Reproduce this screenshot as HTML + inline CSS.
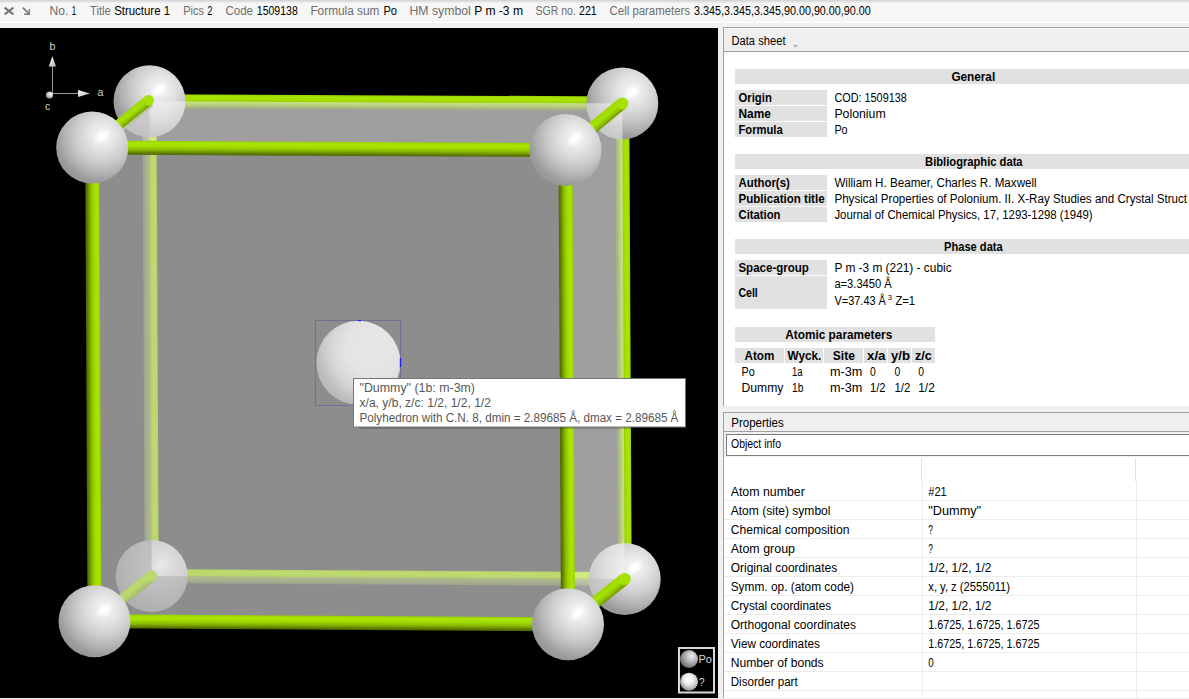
<!DOCTYPE html>
<html><head><meta charset="utf-8"><style>
html,body{margin:0;padding:0;background:#f0f0f0;overflow:hidden}
svg{display:block}
text{font-family:"Liberation Sans",sans-serif}
</style></head><body>
<svg width="1189" height="699" viewBox="0 0 1189 699">
<defs>
<radialGradient id="sph" cx="0.64" cy="0.33" r="0.8" fx="0.64" fy="0.33">
<stop offset="0" stop-color="#ffffff"/><stop offset="0.1" stop-color="#f0f0f0"/><stop offset="0.28" stop-color="#e0e0e0"/>
<stop offset="0.48" stop-color="#cbcbcb"/><stop offset="0.66" stop-color="#b2b2b2"/><stop offset="0.8" stop-color="#9c9c9c"/><stop offset="0.9" stop-color="#969696"/><stop offset="1" stop-color="#a0a0a0"/></radialGradient>
<radialGradient id="spec" cx="0.5" cy="0.5" r="0.5"><stop offset="0" stop-color="#fff" stop-opacity="1"/><stop offset="0.4" stop-color="#fff" stop-opacity="0.75"/><stop offset="1" stop-color="#fff" stop-opacity="0"/></radialGradient>
<radialGradient id="sphd" cx="0.68" cy="0.34" r="0.82" fx="0.68" fy="0.34">
<stop offset="0" stop-color="#ffffff"/><stop offset="0.4" stop-color="#f8f8f8"/><stop offset="0.62" stop-color="#dcdcdc"/><stop offset="0.8" stop-color="#acacac"/><stop offset="0.92" stop-color="#969696"/><stop offset="1" stop-color="#a4a4a4"/></radialGradient>
<radialGradient id="sphs" cx="0.6" cy="0.4" r="0.64"><stop offset="0" stop-color="#ffffff"/><stop offset="1" stop-color="#909090"/></radialGradient>
<radialGradient id="sphl1" cx="0.62" cy="0.38" r="0.66" fx="0.65" fy="0.33"><stop offset="0" stop-color="#f0f0f0"/><stop offset="0.4" stop-color="#c0c0c0"/><stop offset="1" stop-color="#6a6a6a"/></radialGradient>
<radialGradient id="sphl2" cx="0.6" cy="0.4" r="0.66" fx="0.4" fy="0.35"><stop offset="0" stop-color="#ffffff"/><stop offset="0.4" stop-color="#eeeeee"/><stop offset="1" stop-color="#8a8a8a"/></radialGradient>
<linearGradient id="arr" x1="0" y1="0" x2="1" y2="1"><stop offset="0" stop-color="#ffffff"/><stop offset="1" stop-color="#b0b0b0"/></linearGradient>
<linearGradient id="cg1" gradientUnits="userSpaceOnUse" x1="385.87" y1="109.30" x2="385.93" y2="95.30"><stop offset="0" stop-color="#4e6600"/><stop offset="0.12" stop-color="#5e7c00"/><stop offset="0.35" stop-color="#88b800"/><stop offset="0.6" stop-color="#a2dc00"/><stop offset="0.82" stop-color="#aae600"/><stop offset="1" stop-color="#98d000"/></linearGradient>
<linearGradient id="cg2" gradientUnits="userSpaceOnUse" x1="616.50" y1="341.24" x2="630.50" y2="341.16"><stop offset="0" stop-color="#4e6600"/><stop offset="0.12" stop-color="#5e7c00"/><stop offset="0.35" stop-color="#88b800"/><stop offset="0.6" stop-color="#a2dc00"/><stop offset="0.82" stop-color="#aae600"/><stop offset="1" stop-color="#98d000"/></linearGradient>
<linearGradient id="cg3" gradientUnits="userSpaceOnUse" x1="388.16" y1="584.50" x2="388.24" y2="570.50"><stop offset="0" stop-color="#4e6600"/><stop offset="0.12" stop-color="#5e7c00"/><stop offset="0.35" stop-color="#88b800"/><stop offset="0.6" stop-color="#a2dc00"/><stop offset="0.82" stop-color="#aae600"/><stop offset="1" stop-color="#98d000"/></linearGradient>
<linearGradient id="cg4" gradientUnits="userSpaceOnUse" x1="143.60" y1="338.63" x2="157.60" y2="338.57"><stop offset="0" stop-color="#4e6600"/><stop offset="0.12" stop-color="#5e7c00"/><stop offset="0.35" stop-color="#88b800"/><stop offset="0.6" stop-color="#a2dc00"/><stop offset="0.82" stop-color="#aae600"/><stop offset="1" stop-color="#98d000"/></linearGradient>
<linearGradient id="cg5" gradientUnits="userSpaceOnUse" x1="124.75" y1="129.22" x2="116.95" y2="119.58"><stop offset="0" stop-color="#6e9a00"/><stop offset="0.3" stop-color="#90c800"/><stop offset="0.6" stop-color="#a6e200"/><stop offset="1" stop-color="#9cd800"/></linearGradient>
<linearGradient id="cg6" gradientUnits="userSpaceOnUse" x1="126.51" y1="602.96" x2="119.69" y2="594.34"><stop offset="0" stop-color="#6e9a00"/><stop offset="0.3" stop-color="#90c800"/><stop offset="0.6" stop-color="#a6e200"/><stop offset="1" stop-color="#9cd800"/></linearGradient>
<linearGradient id="cg7" gradientUnits="userSpaceOnUse" x1="123.32" y1="127.44" x2="116.78" y2="119.36"><stop offset="0" stop-color="#6e9a00"/><stop offset="0.3" stop-color="#90c800"/><stop offset="0.6" stop-color="#a6e200"/><stop offset="1" stop-color="#9cd800"/></linearGradient>
<linearGradient id="cg8" gradientUnits="userSpaceOnUse" x1="597.71" y1="131.38" x2="590.09" y2="122.12"><stop offset="0" stop-color="#6e9a00"/><stop offset="0.3" stop-color="#90c800"/><stop offset="0.6" stop-color="#a6e200"/><stop offset="1" stop-color="#9cd800"/></linearGradient>
<linearGradient id="cg9" gradientUnits="userSpaceOnUse" x1="600.10" y1="606.34" x2="592.60" y2="596.96"><stop offset="0" stop-color="#6e9a00"/><stop offset="0.3" stop-color="#90c800"/><stop offset="0.6" stop-color="#a6e200"/><stop offset="1" stop-color="#9cd800"/></linearGradient>
<linearGradient id="cg10" gradientUnits="userSpaceOnUse" x1="328.81" y1="155.85" x2="328.89" y2="141.85"><stop offset="0" stop-color="#4e6600"/><stop offset="0.12" stop-color="#5e7c00"/><stop offset="0.35" stop-color="#88b800"/><stop offset="0.6" stop-color="#a2dc00"/><stop offset="0.82" stop-color="#aae600"/><stop offset="1" stop-color="#98d000"/></linearGradient>
<linearGradient id="cg11" gradientUnits="userSpaceOnUse" x1="559.75" y1="387.24" x2="573.75" y2="387.16"><stop offset="0" stop-color="#4e6600"/><stop offset="0.12" stop-color="#5e7c00"/><stop offset="0.35" stop-color="#88b800"/><stop offset="0.6" stop-color="#a2dc00"/><stop offset="0.82" stop-color="#aae600"/><stop offset="1" stop-color="#98d000"/></linearGradient>
<linearGradient id="cg12" gradientUnits="userSpaceOnUse" x1="331.21" y1="629.80" x2="331.29" y2="615.80"><stop offset="0" stop-color="#4e6600"/><stop offset="0.12" stop-color="#5e7c00"/><stop offset="0.35" stop-color="#88b800"/><stop offset="0.6" stop-color="#a2dc00"/><stop offset="0.82" stop-color="#aae600"/><stop offset="1" stop-color="#98d000"/></linearGradient>
<linearGradient id="cg13" gradientUnits="userSpaceOnUse" x1="86.35" y1="384.48" x2="100.35" y2="384.42"><stop offset="0" stop-color="#4e6600"/><stop offset="0.12" stop-color="#5e7c00"/><stop offset="0.35" stop-color="#88b800"/><stop offset="0.6" stop-color="#a2dc00"/><stop offset="0.82" stop-color="#aae600"/><stop offset="1" stop-color="#98d000"/></linearGradient></defs>
<rect x="0" y="0" width="1189" height="28" fill="#f6f6f6"/>
<rect x="0" y="0" width="1189" height="1" fill="#d6d6d6"/>
<rect x="0" y="1" width="1189" height="1" fill="#e2e2e2"/>
<rect x="0" y="2" width="1189" height="1" fill="#ececec"/>
<rect x="0" y="22" width="1189" height="1" fill="#ffffff"/>
<rect x="0" y="23" width="1189" height="5" fill="#f0f0f0"/>
<path d="M4.6,7.6 L13.4,14.4 M13.4,7.6 L4.6,14.4" stroke="#777" stroke-width="2.1"/>
<path d="M22.8,7.6 L28.6,13.4" stroke="#7a7a7a" stroke-width="1.8" fill="none"/><path d="M28.6,9 L30,9 L30,15 L24,15 L24,13.6 L28.6,13.6 Z" fill="#7a7a7a"/>
<text x="49.5" y="15.2" font-size="12.5" font-weight="normal" fill="#6d6d6d" text-anchor="start" textLength="18.8" lengthAdjust="spacingAndGlyphs">No.</text>
<text x="71.7" y="15.2" font-size="12.5" font-weight="normal" fill="#000" text-anchor="start" textLength="4.4" lengthAdjust="spacingAndGlyphs">1</text>
<text x="90.0" y="15.2" font-size="12.5" font-weight="normal" fill="#6d6d6d" text-anchor="start" textLength="20.8" lengthAdjust="spacingAndGlyphs">Title</text>
<text x="114.2" y="15.2" font-size="12.5" font-weight="normal" fill="#000" text-anchor="start" textLength="55.8" lengthAdjust="spacingAndGlyphs">Structure 1</text>
<text x="183.3" y="15.2" font-size="12.5" font-weight="normal" fill="#6d6d6d" text-anchor="start" textLength="20.6" lengthAdjust="spacingAndGlyphs">Pics</text>
<text x="207.3" y="15.2" font-size="12.5" font-weight="normal" fill="#000" text-anchor="start" textLength="5.2" lengthAdjust="spacingAndGlyphs">2</text>
<text x="225.6" y="15.2" font-size="12.5" font-weight="normal" fill="#6d6d6d" text-anchor="start" textLength="27.4" lengthAdjust="spacingAndGlyphs">Code</text>
<text x="256.8" y="15.2" font-size="12.5" font-weight="normal" fill="#000" text-anchor="start" textLength="41.0" lengthAdjust="spacingAndGlyphs">1509138</text>
<text x="310.4" y="15.2" font-size="12.5" font-weight="normal" fill="#6d6d6d" text-anchor="start" textLength="69.1" lengthAdjust="spacingAndGlyphs">Formula sum</text>
<text x="383.4" y="15.2" font-size="12.5" font-weight="normal" fill="#000" text-anchor="start" textLength="13.6" lengthAdjust="spacingAndGlyphs">Po</text>
<text x="409.5" y="15.2" font-size="12.5" font-weight="normal" fill="#6d6d6d" text-anchor="start" textLength="61.3" lengthAdjust="spacingAndGlyphs">HM symbol</text>
<text x="474.2" y="15.2" font-size="12.5" font-weight="normal" fill="#000" text-anchor="start" textLength="48.8" lengthAdjust="spacingAndGlyphs">P m -3 m</text>
<text x="535.5" y="15.2" font-size="12.5" font-weight="normal" fill="#6d6d6d" text-anchor="start" textLength="40.4" lengthAdjust="spacingAndGlyphs">SGR no.</text>
<text x="579.0" y="15.2" font-size="12.5" font-weight="normal" fill="#000" text-anchor="start" textLength="17.7" lengthAdjust="spacingAndGlyphs">221</text>
<text x="609.6" y="15.2" font-size="12.5" font-weight="normal" fill="#6d6d6d" text-anchor="start" textLength="80.4" lengthAdjust="spacingAndGlyphs">Cell parameters</text>
<text x="694.1" y="15.2" font-size="12.5" font-weight="normal" fill="#000" text-anchor="start" textLength="176.7" lengthAdjust="spacingAndGlyphs">3.345,3.345,3.345,90.00,90.00,90.00</text>
<rect x="0" y="28" width="1189" height="671" fill="#f0f0f0"/>
<svg x="0" y="28" width="718" height="670" overflow="hidden"><g transform="translate(0,-28)">
<rect x="0" y="28" width="718" height="670" fill="#000"/>
<path fill="rgb(128,128,128)" fill-opacity="0.524" d="M149.50,101.20 L622.30,103.40 L624.70,579.00 L151.70,576.00 Z"/>
<polygon points="149.53,94.20 622.33,96.40 622.27,110.40 149.47,108.20" fill="url(#cg1)"/>
<polygon points="629.30,103.36 631.70,578.96 617.70,579.04 615.30,103.44" fill="url(#cg2)"/>
<polygon points="151.74,569.00 624.74,572.00 624.66,586.00 151.66,583.00" fill="url(#cg3)"/>
<polygon points="156.50,101.17 158.70,575.97 144.70,576.03 142.50,101.23" fill="url(#cg4)"/>
<circle cx="149.50" cy="101.20" r="36.00" fill="url(#sph)"/>
<ellipse cx="159.22" cy="90.04" rx="10.80" ry="6.12" fill="url(#spec)" transform="rotate(-40 159.22 90.04)"/>
<circle cx="622.30" cy="103.40" r="36.00" fill="url(#sph)"/>
<ellipse cx="632.02" cy="92.24" rx="10.80" ry="6.12" fill="url(#spec)" transform="rotate(-40 632.02 92.24)"/>
<circle cx="151.70" cy="576.00" r="36.00" fill="url(#sph)"/>
<ellipse cx="161.42" cy="564.84" rx="10.80" ry="6.12" fill="url(#spec)" transform="rotate(-40 161.42 564.84)"/>
<circle cx="624.70" cy="579.00" r="36.00" fill="url(#sph)"/>
<ellipse cx="634.42" cy="567.84" rx="10.80" ry="6.12" fill="url(#spec)" transform="rotate(-40 634.42 567.84)"/>
<circle cx="358.4" cy="362.8" r="42" fill="url(#sphd)"/>
<polygon points="88.30,142.78 145.60,96.38 153.40,106.02 96.10,152.42" fill="url(#cg5)"/>
<path fill="rgb(128,128,128)" fill-opacity="0.524" d="M92.20,147.60 L149.50,101.20 L151.70,576.00 L94.50,621.30 Z"/>
<path fill="rgb(128,128,128)" fill-opacity="0.524" d="M94.50,621.30 L151.70,576.00 L624.70,579.00 L568.00,624.30 Z"/>
<polygon points="91.09,616.99 148.29,571.69 155.11,580.31 97.91,625.61" fill="url(#cg6)"/>
<circle cx="151.70" cy="576.00" r="5.5" fill="#a6e200"/>
<path fill="rgb(244,244,244)" fill-opacity="0.524" d="M92.20,147.60 L149.50,101.20 L622.30,103.40 L565.50,150.10 Z"/>
<path fill="rgb(244,244,244)" fill-opacity="0.524" d="M565.50,150.10 L622.30,103.40 L624.70,579.00 L568.00,624.30 Z"/>
<path fill="rgb(210,210,210)" fill-opacity="0.524" d="M92.20,147.60 L565.50,150.10 L568.00,624.30 L94.50,621.30 Z"/>
<polygon points="88.13,142.56 145.43,96.16 151.97,104.24 94.67,150.64" fill="url(#cg7)"/>
<circle cx="148.70" cy="100.20" r="5.2" fill="#a6e200"/>
<rect x="315.5" y="320.5" width="85" height="85" fill="none" stroke="#70709a" stroke-width="1"/>
<rect x="358" y="320" width="3" height="1.2" fill="#2020ff"/>
<rect x="399.8" y="358" width="1.4" height="9" fill="#2020ff"/>
<polygon points="561.69,145.47 618.49,98.77 626.11,108.03 569.31,154.73" fill="url(#cg8)"/>
<circle cx="622.30" cy="103.40" r="6" fill="#a6e200"/>
<polygon points="564.25,619.61 620.95,574.31 628.45,583.69 571.75,628.99" fill="url(#cg9)"/>
<circle cx="624.70" cy="579.00" r="6" fill="#a6e200"/>
<polygon points="92.24,140.60 565.54,143.10 565.46,157.10 92.16,154.60" fill="url(#cg10)"/>
<polygon points="572.50,150.06 575.00,624.26 561.00,624.34 558.50,150.14" fill="url(#cg11)"/>
<polygon points="94.54,614.30 568.04,617.30 567.96,631.30 94.46,628.30" fill="url(#cg12)"/>
<polygon points="99.20,147.57 101.50,621.27 87.50,621.33 85.20,147.63" fill="url(#cg13)"/>
<circle cx="92.20" cy="147.60" r="36.00" fill="url(#sph)"/>
<ellipse cx="101.92" cy="136.44" rx="10.80" ry="6.12" fill="url(#spec)" transform="rotate(-40 101.92 136.44)"/>
<circle cx="565.50" cy="150.10" r="36.00" fill="url(#sph)"/>
<ellipse cx="575.22" cy="138.94" rx="10.80" ry="6.12" fill="url(#spec)" transform="rotate(-40 575.22 138.94)"/>
<circle cx="94.50" cy="621.30" r="36.00" fill="url(#sph)"/>
<ellipse cx="104.22" cy="610.14" rx="10.80" ry="6.12" fill="url(#spec)" transform="rotate(-40 104.22 610.14)"/>
<circle cx="568.00" cy="624.30" r="36.00" fill="url(#sph)"/>
<ellipse cx="577.72" cy="613.14" rx="10.80" ry="6.12" fill="url(#spec)" transform="rotate(-40 577.72 613.14)"/>
<line x1="52.5" y1="95" x2="52.5" y2="66" stroke="#9a9a9a" stroke-width="1"/>
<line x1="52" y1="93.5" x2="79" y2="93.5" stroke="#9a9a9a" stroke-width="1"/>
<path d="M52.3,56 L56,66.5 L48.8,66.5 Z" fill="url(#arr)"/>
<path d="M90,93.5 L78,90 L78,97 Z" fill="url(#arr)"/>
<circle cx="49.5" cy="95" r="3.6" fill="url(#sphs)"/>
<text x="49.6" y="50.0" font-size="10.5" font-weight="normal" fill="#d0d0d0" text-anchor="start">b</text>
<text x="97.6" y="95.8" font-size="10.5" font-weight="normal" fill="#d0d0d0" text-anchor="start">a</text>
<text x="44.9" y="110.2" font-size="10.5" font-weight="normal" fill="#d0d0d0" text-anchor="start">c</text>
<rect x="679" y="648" width="35" height="44.5" fill="#000" stroke="#d8d8d8" stroke-width="2"/>
<circle cx="689" cy="659" r="9" fill="url(#sphl1)"/>
<circle cx="689" cy="681.7" r="9" fill="url(#sphl2)"/>
<text x="698.5" y="662.8" font-size="11.5" font-weight="normal" fill="#d8d8d8" text-anchor="start" textLength="13.5" lengthAdjust="spacingAndGlyphs">Po</text>
<text x="698.8" y="686.0" font-size="10.5" font-weight="normal" fill="#d8d8d8" text-anchor="start">?</text>
</g></svg>
<rect x="359" y="423" width="328" height="6" fill="#000" fill-opacity="0.18"/>
<rect x="353.5" y="378.5" width="332" height="48.5" fill="#fff" stroke="#767676" stroke-width="1"/>
<text x="359.5" y="392.3" font-size="12" font-weight="normal" fill="#575757" text-anchor="start" textLength="115.5" lengthAdjust="spacingAndGlyphs">"Dummy" (1b: m-3m)</text>
<text x="359.5" y="407.3" font-size="12" font-weight="normal" fill="#575757" text-anchor="start" textLength="131.4" lengthAdjust="spacingAndGlyphs">x/a, y/b, z/c: 1/2, 1/2, 1/2</text>
<text x="359.5" y="422.0" font-size="12" font-weight="normal" fill="#575757" text-anchor="start" textLength="318.9" lengthAdjust="spacingAndGlyphs">Polyhedron with C.N. 8, dmin = 2.89685 Å, dmax = 2.89685 Å</text>
<rect x="723" y="27" width="470" height="379" fill="#fff"/>
<rect x="723" y="27" width="470" height="1" fill="#a0a0a0"/>
<rect x="723" y="27" width="1" height="379" fill="#a0a0a0"/>
<rect x="724" y="28" width="470" height="23" fill="#efefef"/>
<rect x="724" y="28" width="470" height="1" fill="#ffffff"/>
<rect x="724" y="51" width="470" height="1" fill="#a0a0a0"/>
<text x="731.5" y="45.0" font-size="12" font-weight="normal" fill="#000" text-anchor="start" textLength="54.0" lengthAdjust="spacingAndGlyphs">Data sheet</text>
<path d="M793,45 L798,45 L795.5,47.6 Z" fill="#a8a8a8"/>
<svg x="724" y="52" width="470" height="354" overflow="hidden"><g transform="translate(-724,-52)">
<rect x="735" y="69" width="477" height="15" fill="#e1e1e1"/>
<text x="951.4" y="81.2" font-size="12" font-weight="bold" fill="#000" text-anchor="start" textLength="43.8" lengthAdjust="spacingAndGlyphs">General</text>
<rect x="735" y="90" width="92" height="15" fill="#e1e1e1"/>
<text x="738.5" y="102.0" font-size="12" font-weight="bold" fill="#000" text-anchor="start" textLength="33.3" lengthAdjust="spacingAndGlyphs">Origin</text>
<text x="834.4" y="102.0" font-size="12" font-weight="normal" fill="#000" text-anchor="start" textLength="72.4" lengthAdjust="spacingAndGlyphs">COD: 1509138</text>
<rect x="735" y="106" width="92" height="15" fill="#e1e1e1"/>
<text x="738.5" y="118.0" font-size="12" font-weight="bold" fill="#000" text-anchor="start" textLength="32.3" lengthAdjust="spacingAndGlyphs">Name</text>
<text x="834.4" y="118.0" font-size="12" font-weight="normal" fill="#000" text-anchor="start" textLength="51.3" lengthAdjust="spacingAndGlyphs">Polonium</text>
<rect x="735" y="122" width="92" height="15" fill="#e1e1e1"/>
<text x="738.5" y="134.0" font-size="12" font-weight="bold" fill="#000" text-anchor="start" textLength="44.2" lengthAdjust="spacingAndGlyphs">Formula</text>
<text x="834.4" y="134.0" font-size="12" font-weight="normal" fill="#000" text-anchor="start" textLength="13.2" lengthAdjust="spacingAndGlyphs">Po</text>
<rect x="735" y="154" width="477" height="15" fill="#e1e1e1"/>
<text x="925.1" y="165.8" font-size="12" font-weight="bold" fill="#000" text-anchor="start" textLength="97.5" lengthAdjust="spacingAndGlyphs">Bibliographic data</text>
<rect x="735" y="175" width="92" height="15" fill="#e1e1e1"/>
<text x="738.5" y="187.0" font-size="12" font-weight="bold" fill="#000" text-anchor="start" textLength="51.3" lengthAdjust="spacingAndGlyphs">Author(s)</text>
<text x="834.4" y="187.0" font-size="12" font-weight="normal" fill="#000" text-anchor="start" textLength="202.3" lengthAdjust="spacingAndGlyphs">William H. Beamer, Charles R. Maxwell</text>
<rect x="735" y="191" width="92" height="15" fill="#e1e1e1"/>
<text x="738.5" y="203.0" font-size="12" font-weight="bold" fill="#000" text-anchor="start" textLength="86.1" lengthAdjust="spacingAndGlyphs">Publication title</text>
<text x="834.4" y="203.0" font-size="12" font-weight="normal" fill="#000" text-anchor="start" textLength="352.7" lengthAdjust="spacingAndGlyphs">Physical Properties of Polonium. II. X-Ray Studies and Crystal Struct</text>
<rect x="735" y="207" width="92" height="15" fill="#e1e1e1"/>
<text x="738.5" y="219.0" font-size="12" font-weight="bold" fill="#000" text-anchor="start" textLength="42.0" lengthAdjust="spacingAndGlyphs">Citation</text>
<text x="834.4" y="219.0" font-size="12" font-weight="normal" fill="#000" text-anchor="start" textLength="258.2" lengthAdjust="spacingAndGlyphs">Journal of Chemical Physics, 17, 1293-1298 (1949)</text>
<rect x="735" y="239" width="477" height="15" fill="#e1e1e1"/>
<text x="944.1" y="250.6" font-size="12" font-weight="bold" fill="#000" text-anchor="start" textLength="58.6" lengthAdjust="spacingAndGlyphs">Phase data</text>
<rect x="735" y="260" width="92" height="15" fill="#e1e1e1"/>
<text x="738.4" y="272.0" font-size="12" font-weight="bold" fill="#000" text-anchor="start" textLength="70.5" lengthAdjust="spacingAndGlyphs">Space-group</text>
<text x="834.4" y="271.8" font-size="12" font-weight="normal" fill="#000" text-anchor="start" textLength="117.2" lengthAdjust="spacingAndGlyphs">P m -3 m (221) - cubic</text>
<rect x="735" y="276" width="92" height="33" fill="#e1e1e1"/>
<text x="738.4" y="297.2" font-size="12" font-weight="bold" fill="#000" text-anchor="start" textLength="19.4" lengthAdjust="spacingAndGlyphs">Cell</text>
<text x="834.4" y="288.2" font-size="12" font-weight="normal" fill="#000" text-anchor="start" textLength="57.4" lengthAdjust="spacingAndGlyphs">a=3.3450 Å</text>
<text x="834.5" y="305.4" font-size="12" font-weight="normal" fill="#000" text-anchor="start" textLength="51.4" lengthAdjust="spacingAndGlyphs">V=37.43 Å</text>
<text x="887.7" y="300.3" font-size="8" font-weight="normal" fill="#000" text-anchor="start" textLength="4.2" lengthAdjust="spacingAndGlyphs">3</text>
<text x="895.4" y="305.4" font-size="12" font-weight="normal" fill="#000" text-anchor="start" textLength="19.6" lengthAdjust="spacingAndGlyphs">Z=1</text>
<rect x="735" y="327" width="200" height="15" fill="#e1e1e1"/>
<text x="785.3" y="338.5" font-size="12" font-weight="bold" fill="#000" text-anchor="start" textLength="107.0" lengthAdjust="spacingAndGlyphs">Atomic parameters</text>
<rect x="735" y="348" width="49" height="15" fill="#e1e1e1"/>
<rect x="785" y="348" width="38" height="15" fill="#e1e1e1"/>
<rect x="824" y="348" width="39" height="15" fill="#e1e1e1"/>
<rect x="864" y="348" width="23" height="15" fill="#e1e1e1"/>
<rect x="888" y="348" width="23" height="15" fill="#e1e1e1"/>
<rect x="912" y="348" width="23" height="15" fill="#e1e1e1"/>
<text x="744.5" y="359.8" font-size="12" font-weight="bold" fill="#000" text-anchor="start" textLength="29.9" lengthAdjust="spacingAndGlyphs">Atom</text>
<text x="787.5" y="359.8" font-size="12" font-weight="bold" fill="#000" text-anchor="start" textLength="33.8" lengthAdjust="spacingAndGlyphs">Wyck.</text>
<text x="832.8" y="359.8" font-size="12" font-weight="bold" fill="#000" text-anchor="start" textLength="22.2" lengthAdjust="spacingAndGlyphs">Site</text>
<text x="867.0" y="359.8" font-size="12" font-weight="bold" fill="#000" text-anchor="start" textLength="18.5" lengthAdjust="spacingAndGlyphs">x/a</text>
<text x="891.0" y="359.8" font-size="12" font-weight="bold" fill="#000" text-anchor="start" textLength="19.0" lengthAdjust="spacingAndGlyphs">y/b</text>
<text x="915.0" y="359.8" font-size="12" font-weight="bold" fill="#000" text-anchor="start" textLength="16.7" lengthAdjust="spacingAndGlyphs">z/c</text>
<text x="741.5" y="376.2" font-size="12" font-weight="normal" fill="#000" text-anchor="start" textLength="13.2" lengthAdjust="spacingAndGlyphs">Po</text>
<text x="791.9" y="376.2" font-size="12" font-weight="normal" fill="#000" text-anchor="start" textLength="10.5" lengthAdjust="spacingAndGlyphs">1a</text>
<text x="830.0" y="376.2" font-size="12" font-weight="normal" fill="#000" text-anchor="start" textLength="32.4" lengthAdjust="spacingAndGlyphs">m-3m</text>
<text x="870.0" y="376.2" font-size="12" font-weight="normal" fill="#000" text-anchor="start" textLength="5.8" lengthAdjust="spacingAndGlyphs">0</text>
<text x="894.5" y="376.2" font-size="12" font-weight="normal" fill="#000" text-anchor="start" textLength="5.8" lengthAdjust="spacingAndGlyphs">0</text>
<text x="918.3" y="376.2" font-size="12" font-weight="normal" fill="#000" text-anchor="start" textLength="5.8" lengthAdjust="spacingAndGlyphs">0</text>
<text x="741.5" y="392.2" font-size="12" font-weight="normal" fill="#000" text-anchor="start" textLength="41.9" lengthAdjust="spacingAndGlyphs">Dummy</text>
<text x="792.0" y="392.2" font-size="12" font-weight="normal" fill="#000" text-anchor="start" textLength="11.3" lengthAdjust="spacingAndGlyphs">1b</text>
<text x="830.0" y="392.2" font-size="12" font-weight="normal" fill="#000" text-anchor="start" textLength="32.4" lengthAdjust="spacingAndGlyphs">m-3m</text>
<text x="870.0" y="392.2" font-size="12" font-weight="normal" fill="#000" text-anchor="start" textLength="15.5" lengthAdjust="spacingAndGlyphs">1/2</text>
<text x="894.5" y="392.2" font-size="12" font-weight="normal" fill="#000" text-anchor="start" textLength="15.9" lengthAdjust="spacingAndGlyphs">1/2</text>
<text x="918.3" y="392.2" font-size="12" font-weight="normal" fill="#000" text-anchor="start" textLength="16.4" lengthAdjust="spacingAndGlyphs">1/2</text>
</g></svg>
<rect x="723.5" y="412.5" width="470" height="290" fill="#fff" stroke="#a0a0a0" stroke-width="1"/>
<rect x="724" y="413" width="470" height="18" fill="#efefef"/>
<rect x="724" y="431" width="470" height="1" fill="#a0a0a0"/>
<rect x="724" y="432" width="470" height="25" fill="#f0f0f0"/>
<text x="731.2" y="426.6" font-size="12" font-weight="normal" fill="#000" text-anchor="start" textLength="52.6" lengthAdjust="spacingAndGlyphs">Properties</text>
<rect x="726.5" y="434.5" width="470" height="21" fill="#fff" stroke="#7a7a7a" stroke-width="1"/>
<text x="731.0" y="448.0" font-size="12" font-weight="normal" fill="#000" text-anchor="start" textLength="50.0" lengthAdjust="spacingAndGlyphs">Object info</text>
<rect x="724" y="457" width="470" height="242" fill="#fff"/>
<rect x="921" y="458" width="1" height="23" fill="#e0e0e0"/>
<rect x="1135" y="458" width="1" height="23" fill="#e0e0e0"/>
<rect x="922" y="481" width="1" height="218" fill="#ececec"/>
<rect x="1136" y="481" width="1" height="218" fill="#ececec"/>
<rect x="724" y="500" width="465" height="1" fill="#ececec"/>
<rect x="724" y="519" width="465" height="1" fill="#ececec"/>
<rect x="724" y="538" width="465" height="1" fill="#ececec"/>
<rect x="724" y="557" width="465" height="1" fill="#ececec"/>
<rect x="724" y="576" width="465" height="1" fill="#ececec"/>
<rect x="724" y="595" width="465" height="1" fill="#ececec"/>
<rect x="724" y="614" width="465" height="1" fill="#ececec"/>
<rect x="724" y="633" width="465" height="1" fill="#ececec"/>
<rect x="724" y="652" width="465" height="1" fill="#ececec"/>
<rect x="724" y="671" width="465" height="1" fill="#ececec"/>
<rect x="724" y="690" width="465" height="1" fill="#ececec"/>
<text x="730.7" y="496.0" font-size="12" font-weight="normal" fill="#000" text-anchor="start" textLength="74.1" lengthAdjust="spacingAndGlyphs">Atom number</text>
<text x="928.3" y="496.0" font-size="12" font-weight="normal" fill="#000" text-anchor="start" textLength="18.5" lengthAdjust="spacingAndGlyphs">#21</text>
<text x="730.7" y="515.0" font-size="12" font-weight="normal" fill="#000" text-anchor="start" textLength="99.8" lengthAdjust="spacingAndGlyphs">Atom (site) symbol</text>
<text x="928.3" y="515.0" font-size="12" font-weight="normal" fill="#000" text-anchor="start" textLength="52.8" lengthAdjust="spacingAndGlyphs">"Dummy"</text>
<text x="730.7" y="534.0" font-size="12" font-weight="normal" fill="#000" text-anchor="start" textLength="118.7" lengthAdjust="spacingAndGlyphs">Chemical composition</text>
<text x="928.3" y="534.0" font-size="12" font-weight="normal" fill="#000" text-anchor="start" textLength="4.7" lengthAdjust="spacingAndGlyphs">?</text>
<text x="730.7" y="553.0" font-size="12" font-weight="normal" fill="#000" text-anchor="start" textLength="64.3" lengthAdjust="spacingAndGlyphs">Atom group</text>
<text x="928.3" y="553.0" font-size="12" font-weight="normal" fill="#000" text-anchor="start" textLength="4.7" lengthAdjust="spacingAndGlyphs">?</text>
<text x="730.7" y="572.0" font-size="12" font-weight="normal" fill="#000" text-anchor="start" textLength="106.5" lengthAdjust="spacingAndGlyphs">Original coordinates</text>
<text x="928.3" y="572.0" font-size="12" font-weight="normal" fill="#000" text-anchor="start" textLength="63.1" lengthAdjust="spacingAndGlyphs">1/2, 1/2, 1/2</text>
<text x="730.7" y="591.0" font-size="12" font-weight="normal" fill="#000" text-anchor="start" textLength="123.4" lengthAdjust="spacingAndGlyphs">Symm. op. (atom code)</text>
<text x="928.3" y="591.0" font-size="12" font-weight="normal" fill="#000" text-anchor="start" textLength="81.7" lengthAdjust="spacingAndGlyphs">x, y, z (2555011)</text>
<text x="730.7" y="610.0" font-size="12" font-weight="normal" fill="#000" text-anchor="start" textLength="100.5" lengthAdjust="spacingAndGlyphs">Crystal coordinates</text>
<text x="928.3" y="610.0" font-size="12" font-weight="normal" fill="#000" text-anchor="start" textLength="63.1" lengthAdjust="spacingAndGlyphs">1/2, 1/2, 1/2</text>
<text x="730.7" y="629.0" font-size="12" font-weight="normal" fill="#000" text-anchor="start" textLength="125.4" lengthAdjust="spacingAndGlyphs">Orthogonal coordinates</text>
<text x="928.3" y="629.0" font-size="12" font-weight="normal" fill="#000" text-anchor="start" textLength="111.2" lengthAdjust="spacingAndGlyphs">1.6725, 1.6725, 1.6725</text>
<text x="730.7" y="648.0" font-size="12" font-weight="normal" fill="#000" text-anchor="start" textLength="89.1" lengthAdjust="spacingAndGlyphs">View coordinates</text>
<text x="928.3" y="648.0" font-size="12" font-weight="normal" fill="#000" text-anchor="start" textLength="111.2" lengthAdjust="spacingAndGlyphs">1.6725, 1.6725, 1.6725</text>
<text x="730.7" y="667.0" font-size="12" font-weight="normal" fill="#000" text-anchor="start" textLength="93.0" lengthAdjust="spacingAndGlyphs">Number of bonds</text>
<text x="928.3" y="667.0" font-size="12" font-weight="normal" fill="#000" text-anchor="start" textLength="5.5" lengthAdjust="spacingAndGlyphs">0</text>
<text x="730.7" y="686.0" font-size="12" font-weight="normal" fill="#000" text-anchor="start" textLength="67.0" lengthAdjust="spacingAndGlyphs">Disorder part</text>
<rect x="0" y="698" width="1189" height="1" fill="#f0f0f0"/>
</svg></body></html>
